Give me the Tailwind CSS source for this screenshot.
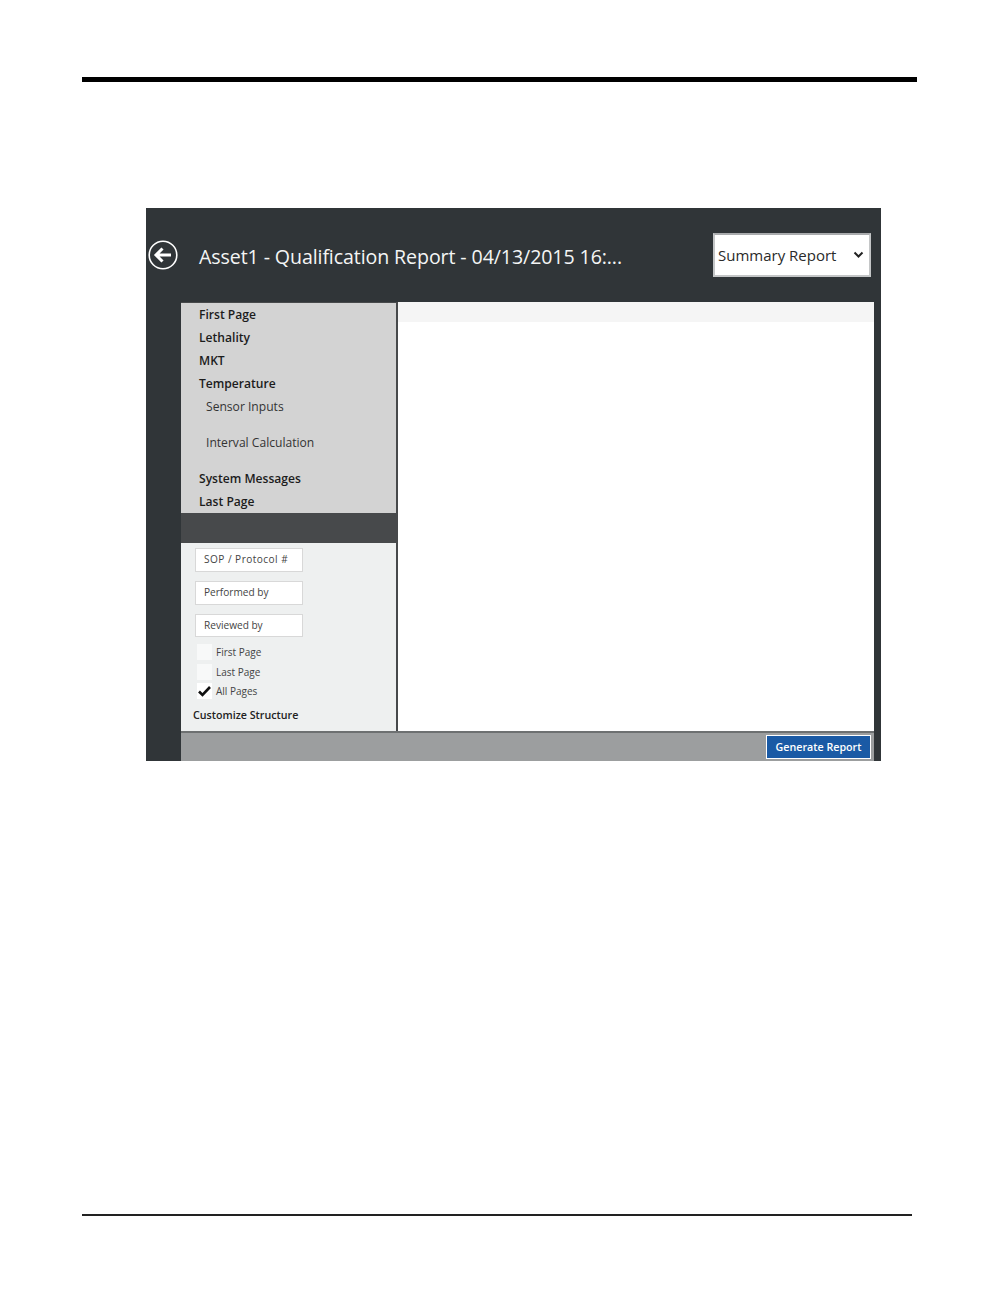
<!DOCTYPE html>
<html><head><meta charset="utf-8"><script src="https://cdn.jsdelivr.net/npm/@tailwindcss/browser@4"></script></head>
<body class="bg-white">
<div class="w-[1008px] h-[1296px] flex flex-col font-['Open_Sans','Noto_Sans',sans-serif] overflow-hidden">
  <div class="ml-[82px] mt-[77px] w-[835px] h-[5px] bg-black shrink-0"></div>
  <div class="ml-[146px] mt-[126px] w-[735px] h-[553px] bg-[#303538] flex flex-col shrink-0">
    <div class="h-[94px] flex shrink-0">
      <svg class="ml-[2px] mt-[32px] w-[30px] h-[30px]" viewBox="0 0 30 30" fill="none" stroke="#fff"><circle cx="15" cy="15" r="13.8" stroke-width="1.6"/><path d="M23 15H8M14.5 8.5 8 15l6.500 6.500" stroke-width="3"/></svg>
      <div class="ml-[21px] mt-[35px] text-[19.600px] leading-[28px] text-[#f4f5f5] tracking-[-0.1px] whitespace-nowrap w-[443px]">Asset1 - Qualification Report - 04/13/2015 16:...</div>
      <div class="ml-[71px] mt-[25px] w-[158px] h-[44px] bg-white border-2 border-t-[#a9abad] border-x-[#c4c6c7] border-b-[#c4c6c7] flex items-center pl-[3px] text-[#2a2a2a] text-[15px] whitespace-nowrap">Summary Report
        <svg class="ml-auto mr-[5px] w-[11px] h-[8px]" viewBox="0 0 11 8" fill="none" stroke="#222" stroke-width="2"><path d="M1.500 1.500 5.500 5.500 9.500 1.500"/></svg>
      </div>
    </div>
    <div class="flex flex-1 min-h-0 pl-[35px] pr-[7px]">
      <div class="w-[215px] flex flex-col shrink-0">
        <div class="h-[211px] bg-[#d3d3d3] border-t border-[#47494b] pl-[18px] text-[#1c1c1c] text-[12.100px] leading-[23px] font-semibold shrink-0">
          <div>First Page</div><div>Lethality</div><div>MKT</div><div>Temperature</div>
          <div class="pl-[7px] font-normal leading-[23px] text-[#333]">Sensor Inputs</div>
          <div class="pl-[7px] font-normal mt-[13px] text-[#333]">Interval Calculation</div>
          <div class="mt-[13px]">System Messages</div><div>Last Page</div>
        </div>
        <div class="h-[30px] bg-[#47494b] shrink-0"></div>
        <div class="flex-1 bg-[#eef0f0] flex flex-col pl-[14px] text-[10.100px] text-[#444] relative">
          <div class="mt-[5px] w-[108px] h-[24px] bg-white border border-[#d8d8d8] flex items-center pl-[8px] tracking-[0.45px]">SOP / Protocol #</div>
          <div class="mt-[9px] w-[108px] h-[24px] bg-white border border-[#d8d8d8] flex items-center pl-[8px]">Performed by</div>
          <div class="mt-[9px] w-[108px] h-[23px] bg-white border border-[#d8d8d8] flex items-center pl-[8px] pt-[1px]">Reviewed by</div>
          <div class="flex items-center mt-[7px] ml-[2px] h-[16px]"><div class="w-[15px] h-[16px] bg-[#f8f9f9]"></div><span class="ml-[4px] text-[10px]">First Page</span></div>
          <div class="flex items-center mt-[4px] ml-[2px] h-[16px]"><div class="w-[15px] h-[16px] bg-[#f8f9f9]"></div><span class="ml-[4px] text-[10px]">Last Page</span></div>
          <div class="flex items-center mt-[3px] ml-[2px] h-[16px]"><div class="w-[15px] h-[16px] bg-white flex items-center justify-center"><svg class="w-[13px] h-[11px]" viewBox="0 0 13 11" fill="none" stroke="#111" stroke-width="2.600"><path d="M1 5.500 4.500 9 12 1"/></svg></div><span class="ml-[4px] text-[10px]">All Pages</span></div>
          <div class="absolute left-[12px] top-[165px] text-[10.700px] leading-[15px] font-semibold text-[#222] whitespace-nowrap">Customize Structure</div>
        </div>
      </div>
      <div class="w-[2px] bg-[#47494b] shrink-0"></div>
      <div class="flex-1 bg-white flex flex-col"><div class="h-[20px] bg-[#f5f5f5]"></div></div>
    </div>
    <div class="ml-[35px] mr-[7px] h-[30px] shrink-0 bg-[#9c9e9f] border-t-2 border-[#6d7071] flex justify-end items-start pt-[2px] pr-[3px]">
      <div class="w-[105px] h-[24px] bg-[#1a5aa5] border border-white text-white text-[10.700px] font-semibold flex items-center justify-center whitespace-nowrap">Generate Report</div>
    </div>
  </div>
  <div class="ml-[82px] mt-[453px] w-[830px] h-[2px] bg-[#222] shrink-0"></div>
</div>
</body></html>
